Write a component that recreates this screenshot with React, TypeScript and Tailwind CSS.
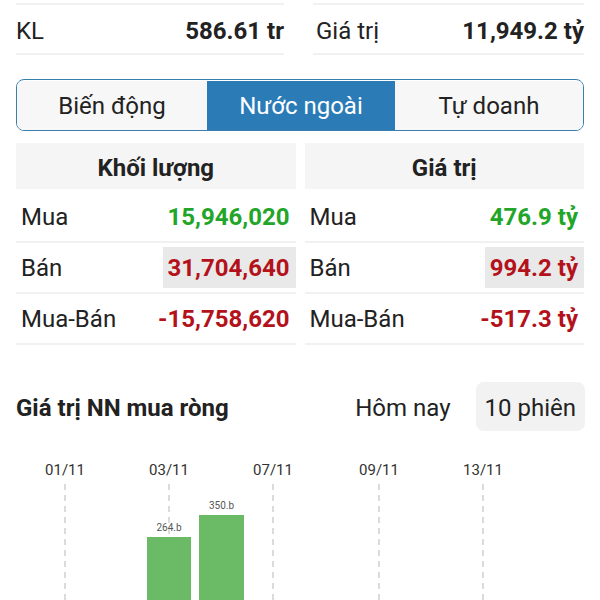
import React from 'react';

const rows = [
  { label: 'Mua', vol: '15,946,020', val: '476.9 tỷ', tone: 'text-[#22a528]', hi: false },
  { label: 'Bán', vol: '31,704,640', val: '994.2 tỷ', tone: 'text-[#b3121b]', hi: true },
  { label: 'Mua-Bán', vol: '-15,758,620', val: '-517.3 tỷ', tone: 'text-[#b3121b]', hi: false },
];

const ticks = [
  { x: 49, label: '01/11' },
  { x: 153, label: '03/11' },
  { x: 257, label: '07/11' },
  { x: 363, label: '09/11' },
  { x: 467, label: '13/11' },
];

const bars = [
  { x: 131, w: 44, top: 87, label: '264.b' },
  { x: 183, w: 45, top: 65, label: '350.b' },
];

const Table = ({ title, pick }: { title: string; pick: 'vol' | 'val' }) => (
  <div className="flex-1 flex flex-col">
    <div className="h-[46px] pt-[4px] bg-[#f5f5f5] flex items-center justify-center font-bold text-[24px] text-[#222]">
      {title}
    </div>
    <div className="h-[3px]" />
    {rows.map((r) => (
      <div key={r.label} className="h-[51px] border-b-2 border-[#f1f1f1] flex items-center justify-between pl-[5px]">
        <span className="text-[24px] text-[#222]">{r.label}</span>
        <span
          className={`h-[41px] flex items-center pl-[5px] pr-[6px] font-bold text-[24px] ${r.tone} ${
            r.hi ? 'bg-[#e9e9e9]' : ''
          }`}
        >
          {r[pick]}
        </span>
      </div>
    ))}
  </div>
);

export default function App() {
  return (
    <div
      className="w-[600px] h-[600px] overflow-hidden bg-white px-4"
      style={{ fontFamily: 'Roboto, "Noto Sans", sans-serif' }}
    >
      {/* tổng quan */}
      <div className="pt-[3px] flex gap-[29px]">
        <div className="flex-1 h-[52px] pt-[3px] border-y-2 border-[#f1f1f1] flex items-center justify-between">
          <span className="text-[24px] text-[#222]">KL</span>
          <span className="text-[24px] font-bold text-[#222]">586.61 tr</span>
        </div>
        <div className="flex-1 h-[52px] pt-[3px] border-y-2 border-[#f1f1f1] flex items-center justify-between pl-[3px]">
          <span className="text-[24px] text-[#222]">Giá trị</span>
          <span className="text-[24px] font-bold text-[#222]">11,949.2 tỷ</span>
        </div>
      </div>

      {/* tabs */}
      <div className="mt-[24px] h-[52px] pt-[1px] flex rounded-[8px] border-[1.5px] border-[#3a7fab] overflow-hidden text-[24px]">
        <div className="w-[190px] bg-[#f7f7f7] flex items-center justify-center text-[#222]">Biến động</div>
        <div className="w-[188px] bg-[#2b7bb7] flex items-center justify-center text-white">Nước ngoài</div>
        <div className="flex-1 bg-[#f7f7f7] flex items-center justify-center text-[#222]">Tự doanh</div>
      </div>

      {/* bảng */}
      <div className="mt-[12px] flex gap-[9px]">
        <Table title="Khối lượng" pick="vol" />
        <Table title="Giá trị" pick="val" />
      </div>

      {/* biểu đồ */}
      <div className="mt-[37px] flex items-center justify-between">
        <span className="text-[24px] font-bold text-[#222] pt-[3px]">Giá trị NN mua ròng</span>
        <div className="flex items-center gap-[25px] text-[24px] text-[#222]">
          <span className="pt-[2px]">Hôm nay</span>
          <span className="h-[49px] pt-[2px] px-[9px] flex items-center rounded-[8px] bg-[#f2f2f2] mr-[-1px]">10 phiên</span>
        </div>
      </div>

      <svg width="568" height="160" className="mt-[19px] block">
        {ticks.map((t) => (
          <g key={t.label}>
            <text x={t.x} y={21} textAnchor="middle" dominantBaseline="middle" fontSize="15" fill="#333">
              {t.label}
            </text>
            <line x1={t.x} y1={34} x2={t.x} y2={160} stroke="#c4c4c4" strokeWidth="1.2" strokeDasharray="6 5" />
          </g>
        ))}
        {bars.map((b) => (
          <g key={b.label}>
            <rect x={b.x} y={b.top} width={b.w} height={160 - b.top} fill="#6bbb66" />
            <text x={b.x + b.w / 2} y={b.top - 9} textAnchor="middle" dominantBaseline="middle" fontSize="10" fill="#555">
              {b.label}
            </text>
          </g>
        ))}
      </svg>
    </div>
  );
}
